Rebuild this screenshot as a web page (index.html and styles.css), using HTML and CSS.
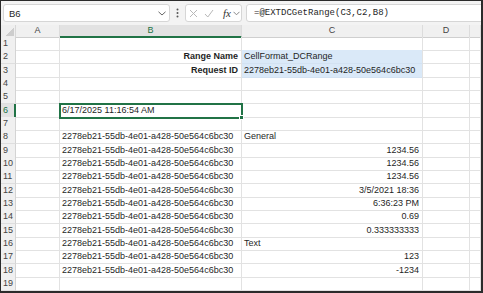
FILE: index.html
```html
<html>
<head>
    <title>CellFormat_DCRange</title>
    <link rel="stylesheet" href="styles.css">
</head>
<body>
  <div class="window">

    <div class="formula-bar">
      <div class="name-box">
        <span>B6</span>
        <svg width="8" height="5" viewBox="0 0 8 5"><path d="M0.5 0.8 L4 4 L7.5 0.8" fill="none" stroke="#666" stroke-width="1"/></svg>
      </div>
      <svg class="dots" width="3" height="10" viewBox="0 0 3 10">
        <circle cx="1.5" cy="1.5" r="1" fill="#555"/>
        <circle cx="1.5" cy="5" r="1" fill="#555"/>
        <circle cx="1.5" cy="8.5" r="1" fill="#555"/>
      </svg>
      <div class="fx-box">
        <svg width="9" height="9" viewBox="0 0 9 9"><path d="M1 1 L8 8 M8 1 L1 8" stroke="#b8b8b8" stroke-width="1" fill="none"/></svg>
        <svg width="10" height="9" viewBox="0 0 10 9"><path d="M1 5 L3.8 8 L9 1" stroke="#b8b8b8" stroke-width="1" fill="none"/></svg>
        <span class="fx">fx</span>
        <svg width="7" height="5" viewBox="0 0 7 5"><path d="M0.5 0.8 L3.5 3.8 L6.5 0.8" fill="none" stroke="#888" stroke-width="1"/></svg>
      </div>
      <div class="formula">=@EXTDCGetRange(C3,C2,B8)</div>
    </div>

    <div class="sheet">
      <div class="r head">
        <div class="corner"></div>
        <div class="col">A</div>
        <div class="col active">B</div>
        <div class="col">C</div>
        <div class="col">D</div>
        <div class="col"></div>
      </div>

      <div class="r"><div class="h">1</div><div class="c"></div><div class="c"></div><div class="c"></div><div class="c"></div><div class="c"></div></div>
      <div class="r"><div class="h">2</div><div class="c"></div><div class="c lbl">Range Name</div><div class="c blue">CellFormat_DCRange</div><div class="c"></div><div class="c"></div></div>
      <div class="r"><div class="h">3</div><div class="c"></div><div class="c lbl">Request ID</div><div class="c blue">2278eb21-55db-4e01-a428-50e564c6bc30</div><div class="c"></div><div class="c"></div></div>
      <div class="r"><div class="h">4</div><div class="c"></div><div class="c"></div><div class="c"></div><div class="c"></div><div class="c"></div></div>
      <div class="r"><div class="h">5</div><div class="c"></div><div class="c"></div><div class="c"></div><div class="c"></div><div class="c"></div></div>
      <div class="r"><div class="h active">6</div><div class="c"></div><div class="c selected">6/17/2025 11:16:54 AM</div><div class="c"></div><div class="c"></div><div class="c"></div></div>
      <div class="r"><div class="h">7</div><div class="c"></div><div class="c"></div><div class="c"></div><div class="c"></div><div class="c"></div></div>
      <div class="r"><div class="h">8</div><div class="c"></div><div class="c">2278eb21-55db-4e01-a428-50e564c6bc30</div><div class="c">General</div><div class="c"></div><div class="c"></div></div>
      <div class="r"><div class="h">9</div><div class="c"></div><div class="c">2278eb21-55db-4e01-a428-50e564c6bc30</div><div class="c num">1234.56</div><div class="c"></div><div class="c"></div></div>
      <div class="r"><div class="h">10</div><div class="c"></div><div class="c">2278eb21-55db-4e01-a428-50e564c6bc30</div><div class="c num">1234.56</div><div class="c"></div><div class="c"></div></div>
      <div class="r"><div class="h">11</div><div class="c"></div><div class="c">2278eb21-55db-4e01-a428-50e564c6bc30</div><div class="c num">1234.56</div><div class="c"></div><div class="c"></div></div>
      <div class="r"><div class="h">12</div><div class="c"></div><div class="c">2278eb21-55db-4e01-a428-50e564c6bc30</div><div class="c num">3/5/2021 18:36</div><div class="c"></div><div class="c"></div></div>
      <div class="r"><div class="h">13</div><div class="c"></div><div class="c">2278eb21-55db-4e01-a428-50e564c6bc30</div><div class="c num">6:36:23 PM</div><div class="c"></div><div class="c"></div></div>
      <div class="r"><div class="h">14</div><div class="c"></div><div class="c">2278eb21-55db-4e01-a428-50e564c6bc30</div><div class="c num">0.69</div><div class="c"></div><div class="c"></div></div>
      <div class="r"><div class="h">15</div><div class="c"></div><div class="c">2278eb21-55db-4e01-a428-50e564c6bc30</div><div class="c num">0.333333333</div><div class="c"></div><div class="c"></div></div>
      <div class="r"><div class="h">16</div><div class="c"></div><div class="c">2278eb21-55db-4e01-a428-50e564c6bc30</div><div class="c">Text</div><div class="c"></div><div class="c"></div></div>
      <div class="r"><div class="h">17</div><div class="c"></div><div class="c">2278eb21-55db-4e01-a428-50e564c6bc30</div><div class="c num">123</div><div class="c"></div><div class="c"></div></div>
      <div class="r"><div class="h">18</div><div class="c"></div><div class="c">2278eb21-55db-4e01-a428-50e564c6bc30</div><div class="c num">-1234</div><div class="c"></div><div class="c"></div></div>
      <div class="r"><div class="h">19</div><div class="c"></div><div class="c"></div><div class="c"></div><div class="c"></div><div class="c"></div></div>
    </div>

  </div>
</body>
</html>
```

FILE: styles.css
```css
    body {
        margin: 0;
        font-family: "Liberation Sans", Arial, sans-serif;
        font-size: 9px;
        color: #1f1f1f;
    }

    .window {
        width: 483px;
        height: 293px;
        box-sizing: border-box;
        border: 1px solid #2b2b2b;
        border-right-width: 2px;
        border-bottom-width: 2px;
        background: #fff;
        overflow: hidden;
    }

    /* formula bar */
    .formula-bar {
        height: 24px;
        display: flex;
        align-items: center;
        background: #f3f3f3;
        padding-left: 2px;
    }

    .name-box {
        width: 167px;
        height: 18px;
        box-sizing: border-box;
        border: 1px solid #d6d6d6;
        border-radius: 3px;
        background: #fff;
        display: flex;
        align-items: center;
        justify-content: space-between;
        padding: 0 3px 0 5px;
        font-size: 9.5px;
    }

    .dots {
        margin-left: 6px;
    }

    .fx-box {
        margin-left: 6px;
        width: 57px;
        height: 18px;
        box-sizing: border-box;
        border: 1px solid #d6d6d6;
        border-radius: 3px;
        background: #fff;
        display: flex;
        align-items: center;
        gap: 6px;
        padding-left: 3px;
    }

    .fx {
        font-family: "Liberation Serif", serif;
        font-style: italic;
        font-size: 11px;
        color: #333;
        margin-left: 3px;
        margin-right: -4px;
    }

    .formula {
        flex: 1;
        margin-left: 4px;
        margin-right: -6px;
        height: 18px;
        box-sizing: border-box;
        border: 1px solid #d6d6d6;
        border-radius: 3px;
        background: #fff;
        display: flex;
        align-items: center;
        padding-left: 7px;
        font-family: "Liberation Mono", monospace;
        font-size: 9px;
    }

    /* grid */
    .r {
        display: grid;
        grid-template-columns: 15px 44px 182px 181px 47px 1fr;
        height: 13.33px;
    }

    .r.head {
        height: 12px;
    }

    .corner {
        background: #efefef linear-gradient(to top left, #cdcdcd 50%, transparent 50%) no-repeat right 1px bottom 1px / 8px 8px;
        border-right: 1px solid #d8d8d8;
        border-bottom: 1px solid #cfcfcf;
    }

    .col {
        background: #f0f0f0;
        border-right: 1px solid #dcdcdc;
        border-bottom: 1px solid #cfcfcf;
        color: #444;
        text-align: center;
        line-height: 11px;
    }

    .col.active {
        background: #e2e2e2;
        color: #217346;
        border-bottom: 2px solid #217346;
    }

    .h {
        background: #f0f0f0;
        border-right: 1px solid #d4d4d4;
        border-bottom: 1px solid #dedede;
        color: #444;
        padding-left: 2px;
        line-height: 13px;
        box-sizing: border-box;
    }

    .h.active {
        background: #e2e2e2;
        color: #217346;
        border-right: 2px solid #217346;
    }

    .c {
        border-right: 1px solid #e2e2e2;
        border-bottom: 1px solid #e2e2e2;
        box-sizing: border-box;
        padding: 0 3px 0 2px;
        line-height: 13px;
        white-space: nowrap;
        overflow: hidden;
    }

    .c.num {
        text-align: right;
    }

    .c.lbl {
        font-weight: bold;
        text-align: right;
    }

    .c.blue {
        background: #dae9f8;
        border-bottom-color: #d3e2f2;
    }

    .c.selected {
        position: relative;
        overflow: visible;
        outline: 2px solid #217346;
        outline-offset: -1px;
        z-index: 1;
    }

    .c.selected::after {
        content: "";
        position: absolute;
        right: -3px;
        bottom: -3px;
        width: 3px;
        height: 3px;
        background: #217346;
        border: 1px solid #fff;
    }
```
